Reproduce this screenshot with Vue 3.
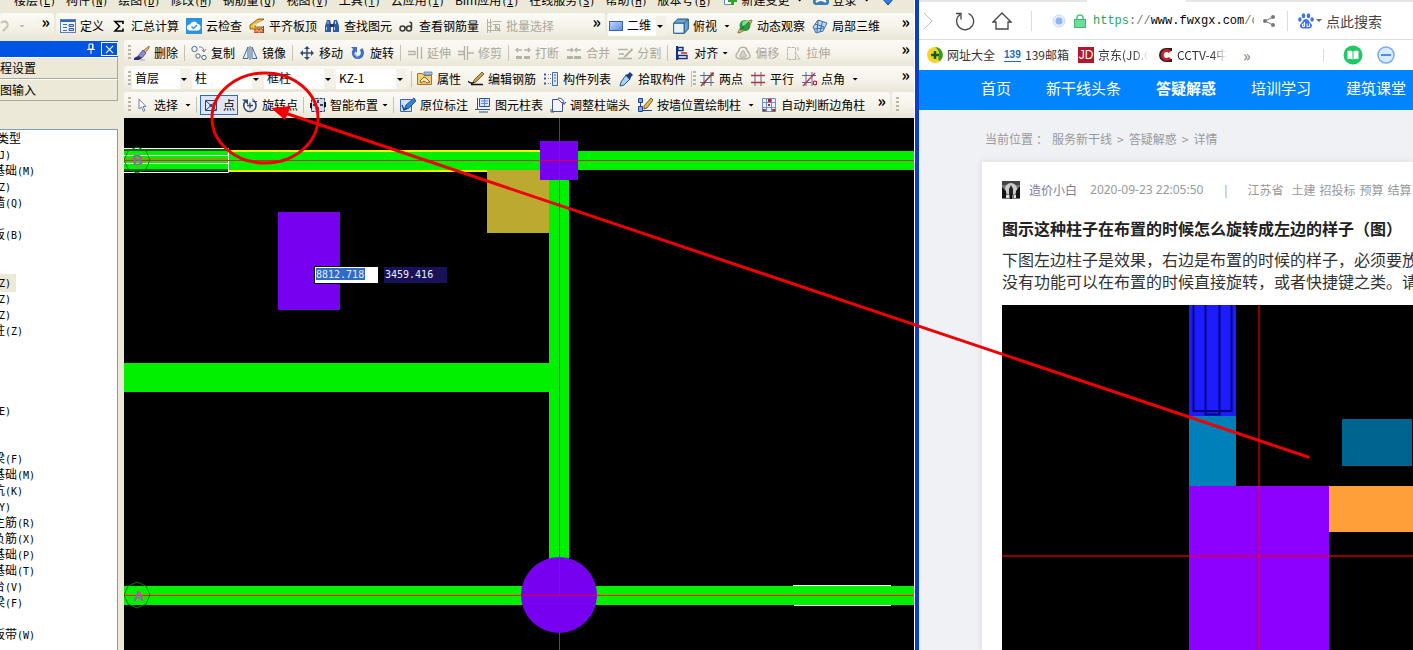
<script setup>
import { ref } from 'vue'

const icons = {
  undo: '<path d="M1 5c5-4 9 1 5 5l-3 3" fill="none" stroke="#c4c2b6" stroke-width="2"/>',
  define: '<rect x=".5" y="1.500" width="15" height="13" fill="#eef3fd" stroke="#5b7fc4"/><path d="M1 2h14v2H1z" fill="#3a62b4"/><path d="M3 6.500h4M3 9.500h4M3 12.500h4" stroke="#4a68a8"/><path d="M9 6.500h4.500v2H9zM9 10.500h4.500v2H9z" fill="#b9cdf5" stroke="#3a5fae"/>',
  sigma: '<path d="M12 6V3.500H4l4.500 4.700L4 13h8v-2.500" fill="none" stroke="#000" stroke-width="1.600"/>',
  cloud: '<rect width="16" height="16" fill="#2b94dc"/><path d="M4 12.500a3 3 0 0 1 0-6 4 4 0 0 1 7.500-.5 3.300 3.300 0 0 1 .5 6.500z" fill="#fff"/><path d="M5.500 8.500l2 2 3.500-3.500" fill="none" stroke="#2b94dc" stroke-width="1.500"/>',
  slab: '<path d="M1 7l8-6h6L6 7v2h8l-2 2H1z" fill="#f6b93a" stroke="#6b4a1a" stroke-width=".8"/><path d="M4 8l9-5" stroke="#fff3c4"/><path d="M5 11h9v4H5z" fill="#c9452b"/><path d="M5 13h9M8 11v2M12 11v2M10 13v2" stroke="#ffdf9a" stroke-width=".8"/><path d="M14.500 8v7" stroke="#555"/>',
  find: '<path d="M3 2h3l1 4v8H1V8zM10 2h3l2 6v6H9V6z" fill="#2f5c9e"/><path d="M6 6h4v3H6z" fill="#1d3a6a"/><path d="M2.500 9v3M10.500 9v3M4 3v3M11.500 3v3" stroke="#a9c9f2"/>',
  glasses: '<g fill="none" stroke="#3b3b3b" stroke-width="1.500"><circle cx="3.500" cy="10.500" r="2.500"/><circle cx="10" cy="10.500" r="2.500"/><path d="M6 10q1-1 1.500 0M12.500 10V5l-2-1"/></g>',
  batch: '<g fill="none" stroke="#b5b2a4"><path d="M1.500 1v14M4.500 1v14M1 4.500h5M1 8.500h5M1 12.500h14M6.500 3.500h9M6.500 6.500h7v6M9.500 6v6"/><path d="M9 8l5 5" stroke-width="2"/></g>',
  plane2d: '<defs><linearGradient id="p2d" x2="1" y2="1"><stop stop-color="#c5dcff"/><stop offset="1" stop-color="#5a8be0"/></linearGradient></defs><rect x="1.500" y="3.500" width="13" height="9" fill="url(#p2d)" stroke="#3a62b4"/>',
  cube: '<path d="M.7 5l4-4h10.600v10l-4 4.300H.7z" fill="#6aa6d6" stroke="#244f7c"/><path d="M1.200 5.500h9.500v9H1.200z" fill="#e6f4ff"/><path d="M1 5.200h10.200v10M11.200 5.200l4-4" fill="none" stroke="#244f7c"/>',
  orbit: '<path d="M1 15c0-4 9-13 14-13 0 4-9 13-14 13z" fill="#d7b38a" stroke="#a8682c"/><circle cx="8" cy="7.500" r="5.500" fill="#2c9a45"/><path d="M5 5c2-3 6-3 7-1-1 3-3 2-3 4-2 1-4 0-4-3z" fill="#7fdc84"/><path d="M3 12l9-8" stroke="#17662a"/>',
  local3d: '<path d="M1 9l5-7 9 3-4 8-7 2z" fill="#b9d8f4" stroke="#3a6ca4"/><path d="M3 6l9 3M6 2l-1 12M10.500 3.500L8 14M2 11l10-1" stroke="#3a6ca4" fill="none"/>',
  erase: '<path d="M15 1L9 6l2 2 4-5z" fill="#e4b67a" stroke="#7c4d20" stroke-width=".7"/><path d="M9 5L4 11l4 2 4-5z" fill="#8a8ed0" stroke="#333a80" stroke-width=".7"/><path d="M0 13l4-2 4 2-3 2H0z" fill="#29336e"/><path d="M6 15h5" stroke="#9aa"/>',
  copy: '<g fill="#f4f6fb" stroke="#556684"><circle cx="3.500" cy="4" r="2.700"/><circle cx="7" cy="11" r="2.200"/><circle cx="13" cy="12.500" r="2.200"/></g><path d="M8 2q4-1 5 4M11 5l2 2 2-3" fill="none" stroke="#6f83a6"/>',
  mirror: '<path d="M6 2v11.500H1zM10 2v11.500h5z" fill="#e4edf8" stroke="#456797"/><path d="M8 1v14" stroke="#456797"/>',
  move: '<path d="M8 2v12M2 8h12" stroke="#324e78" stroke-width="1.500"/><path d="M8 1l3 3H5zM8 15l3-3H5zM1 8l3-3v6zM15 8l-3-3v6z" fill="#324e78"/>',
  rotate: '<path d="M4.500 4.500C2 8 4 12.500 8 12.500S14 8 11 4" fill="none" stroke="#3f6fc2" stroke-width="3"/><path d="M1 2h6v6z" fill="#3f6fc2"/><path d="M4.500 8c0 2 2 4 4 4" fill="none" stroke="#a8c6f5"/>',
  extend: '<path d="M1 6.500h7v3H1M10.500 2v12M14.500 2v12" fill="none" stroke="#b5b2a4" stroke-width="1.300"/>',
  trim: '<path d="M0 6.500h6v3H0M6.500 1v14M9.500 1v14M10 8h6" fill="none" stroke="#b5b2a4" stroke-width="1.300"/>',
  brk: '<path d="M1 11h6v3H1zM9 11h6v3H9z" fill="#b5b2a4"/><path d="M1 5h6M15 5H9M3 3L1 5l2 2M13 3l2 2-2 2" fill="none" stroke="#b5b2a4" stroke-width="1.300"/>',
  merge: '<path d="M1 11h6v3H1zM8 11h7v3H8z" fill="#b5b2a4"/><path d="M1 5h6M15 5H9M5 3l2 2-2 2M11 3L9 5l2 2" fill="none" stroke="#b5b2a4" stroke-width="1.300"/>',
  split: '<path d="M1 4.500h10M1 13.500h14M2 9h5" stroke="#b5b2a4" stroke-width="1.500"/><path d="M15 3L8 10l-2 3 3-1 7-7z" fill="#b5b2a4"/>',
  align: '<path d="M3 1v14" stroke="#152f7a" stroke-width="2"/><path d="M4 2.500h5v3H4zM4 10.500h9v3H4z" fill="#fff" stroke="#152f7a" stroke-width="1.400"/><path d="M7 8h6" stroke="#c3262e" stroke-width="1.500"/>',
  offset: '<path d="M1 11c0-4 3-3 3-6s7-4 8 0c0 2 3 2 3 6s-14 4-14 0z" fill="none" stroke="#b5b2a4" stroke-width="1.500"/><path d="M4.500 11c0-2 2-2 2-4s3-2 3 0 2 2 2 4-7 1.500-7 0z" fill="#d2cfc3" stroke="#b5b2a4"/>',
  stretch: '<path d="M1.500 2.500h8v12h-8zM9 7l5 7H9" fill="none" stroke="#b5b2a4" stroke-dasharray="3 1"/><path d="M12 2v4" stroke="#b5b2a4"/>',
  props: '<path d="M.5 13.500v-11h5l1.500 2h7.500v9z" fill="#f8d36c" stroke="#a4742a"/><path d="M7 1h8v3H7z" fill="#9cc0ea" stroke="#4b6ea8" stroke-width=".7"/><path d="M3 10l4-4 2 1 4 4-3 1-3-2-3 2z" fill="#fbecc7" stroke="#5a3d1a" stroke-width=".8"/>',
  editbar: '<path d="M14 1L6 9l-1 3 3-1 8-8z" fill="#c7a24b" stroke="#4a3510" stroke-width=".7"/><path d="M0 10q2 3 6 1.500M3 13.500h12" fill="none" stroke="#111" stroke-width="1.300"/>',
  list: '<path d="M1 3.500h2M1 7.500h2M1 12.500h2" stroke="#2f59a8" stroke-width="2"/><path d="M5 3.500h3M5 7.500h3M5 12.500h3" stroke="#6b7ca4" stroke-dasharray="1 1"/><path d="M9.500 1.500h5v13h-5z" fill="#dce8fc" stroke="#4468a8"/><path d="M11 4h2M11 7h2M11 10h2" stroke="#4468a8"/>',
  picker: '<path d="M8 4l4 4-6 6-4 1 1-4z" fill="#a9d3fa" stroke="#27588f"/><path d="M7 4l3-1 2-2 3 3-2 2-1 3z" fill="#163e80"/>',
  twopt: '<path d="M5 1v14M12 1v14M1 4.500h14M1 11.500h14" stroke="#56669a"/><path d="M2 15L14 2" stroke="#7b4a25" stroke-width="1.500"/><path d="M13 1.500h2v2h-2zM4 11h2v2H4z" fill="#c3262e"/>',
  parallel: '<path d="M5 1v14M11 1v14" stroke="#56669a"/><path d="M1 4.500h14M1 11.500h14" stroke="#b8344a" stroke-width="1.500"/>',
  ptangle: '<path d="M5 1v14M11 1v14M1 4.500h14M1 11.500h9" stroke="#56669a"/><path d="M2 15L14 2" stroke="#b8344a" stroke-width="1.300"/><circle cx="14" cy="12" r="1.800" fill="#fff" stroke="#d21e2b" stroke-width="1.300"/>',
  cursor: '<path d="M5 2v10l2.500-2 2 4.500 1.500-1-2-4h3z" fill="#fff" stroke="#6e7fa8"/>',
  point: '<path d="M2.500 3.500h11v10h-11zM3 4l10 9M13 4L3 13" fill="none" stroke="#27417e"/><circle cx="8" cy="8.500" r="1.500" fill="#27417e"/>',
  rotpoint: '<path d="M4 3.500C-.5 8 2.500 14.500 8 14.500S16 8 12 3.500" fill="none" stroke="#2e4878" stroke-width="1.500"/><path d="M0 2.500h6v5z" fill="#2e4878"/><path d="M8 5.500v6M5 8.500h6" stroke="#2e4878" stroke-width="1.300"/><path d="M11 5V1.500M11 4.500h4" stroke="#2e4878"/>',
  smart: '<path d="M1.500 1.500h13v13h-13z" fill="#cfdbf2" stroke="#25375f" stroke-dasharray="3 1"/><path d="M8 3v3M8 10v3M3 8h3M10 8h3" stroke="#111" stroke-width="1.500"/><path d="M1 6v5M15 5v5" stroke="#111" stroke-width="2"/>',
  inplace: '<path d="M.5 2.500h11v12H.5z" fill="#cfe0fa" stroke="#3b66b0"/><path d="M14 1L6 8l-2 5 5-2 7-7z" fill="#3a82d8" stroke="#173f7e" stroke-width=".8"/><path d="M2 8l2 5 3-2" fill="none" stroke="#173f7e" stroke-width="1.300"/>',
  coltable: '<path d="M2.500 1v11.500H0" fill="none" stroke="#2f4f96"/><path d="M4.500 1.500h10v8h-10z" fill="#dce8fc" stroke="#2f4f96"/><path d="M6 4h7M6 6.500h7M9.500 2v7" stroke="#5f86cf"/><path d="M1 12.500h14M4 15h9" stroke="#2f4f96"/>',
  colend: '<path d="M2.500 2.500h6l4 4v8h-10z" fill="#f2f4fb" stroke="#3e5387"/><path d="M8 1q6 0 6 6M12 5l2 2.500L16 5" fill="none" stroke="#3e5387"/><path d="M1 12v3h3" fill="none" stroke="#3e5387"/>',
  bywall: '<path d="M1.500 1.500h4v4h-4zM1.500 9.500h4v5h-4z" fill="#7fa5e6" stroke="#24408a"/><path d="M3.500 5v5M6 13.500h9" stroke="#24408a"/><path d="M14 1L7 9v3l3-1 6-8z" fill="#e6b94c" stroke="#5a421a" stroke-width=".8"/>',
  autocorner: '<path d="M1.500 1.500h13v13h-13z" fill="#eef3fc" stroke="#6f8cc4"/><path d="M5.500 1v14M10.500 1v14M1 5.500h14M1 10.500h14" stroke="#6f8cc4"/><path d="M1.500 12h4v3h-4zM10.500 12h4v3h-4z" fill="#6b7480"/><path d="M7 2h3v3H7zM7 7h2v2H7zM2 12h2v2H2zM12 12h2v2h-2z" fill="#c4202c"/>',
  newdoc: '<path d="M2.500-4.500h9v17h-9z" fill="#fff" stroke="#6684b8"/><path d="M10.500 4v9M6 8.500h9" stroke="#2fa52f" stroke-width="3"/>',
  login: '<rect y="-3" width="16" height="16" rx="3" fill="#3a7fb4"/><circle cx="8" cy="4" r="3" fill="#fff"/><path d="M3 10q5-4 10 0" stroke="#fff" stroke-width="2" fill="none"/>',
  down: '<path d="M2 6h12l-6 7z" fill="#2f7fe0" stroke="#123f8c"/>'
}

const menus = [
  ['楼层', 'L'], ['构件', 'N'], ['绘图', 'D'], ['修改', 'M'], ['钢筋量', 'Q'], ['视图', 'V'], ['工具', 'T'],
  ['云应用', 'I'], ['Bim应用', 'I'], ['在线服务', 'S'], ['帮助', 'H'], ['版本号', 'B']
]

const b = (icon, label, extra = {}) => ({ icon, label, ...extra })
const off = { disabled: true }
const sep = { sep: true }
const grip = { grip: true }

const mainTools = [
  b('define', '定义'), b('sigma', '汇总计算'), b('cloud', '云检查'), b('slab', '平齐板顶'),
  b('find', '查找图元'), b('glasses', '查看钢筋量'), b('batch', '批量选择', off)
]
const viewTools = [b('cube', '俯视', { arrow: 'wide' }), b('orbit', '动态观察'), b('local3d', '局部三维')]

const editTools = [
  grip, b('erase', '删除'), sep, b('copy', '复制'), b('mirror', '镜像'), sep, b('move', '移动'), b('rotate', '旋转'), sep,
  b('extend', '延伸', off), b('trim', '修剪', off), sep, b('brk', '打断', off), b('merge', '合并', off), b('split', '分割', off), sep,
  b('align', '对齐', { arrow: 'near' }), b('offset', '偏移', off), b('stretch', '拉伸', off)
]
const memberTools = [
  sep, b('props', '属性'), b('editbar', '编辑钢筋'), b('list', '构件列表'), b('picker', '拾取构件'), sep, grip,
  b('twopt', '两点'), b('parallel', '平行'), b('ptangle', '点角', { arrow: 'wide' })
]
const drawTools = [
  grip, b('cursor', '选择', { arrow: 'wide' }), sep, b('point', '点', { pressed: true }), b('rotpoint', '旋转点'), sep,
  b('smart', '智能布置', { arrow: 'near' }), sep, b('inplace', '原位标注'), b('coltable', '图元柱表'), b('colend', '调整柱端头'),
  b('bywall', '按墙位置绘制柱', { arrow: 'wide' }), b('autocorner', '自动判断边角柱')
]
const combos = [
  { label: '楼层', value: '首层' }, { label: '构件类型', value: '柱' },
  { label: '构件类别', value: '框柱' }, { label: '构件名称', value: 'KZ-1' }
]

const tree = [
  ['', 'J'], ['基础', 'M'], ['', 'Z'], ['墙', 'Q'], null, ['板', 'B'], null, null, ['', 'Z', true], ['', 'Z'], ['', 'Z'],
  ['柱', 'Z'], null, null, null, null, ['', 'E'], null, null, ['梁', 'F'], ['基础', 'M'], ['坑', 'K'], ['', 'Y'],
  ['主筋', 'R'], ['负筋', 'X'], ['基础', 'P'], ['基础', 'T'], ['台', 'V'], ['梁', 'F'], null, ['板带', 'W']
]

const navs = ['首页', '新干线头条', '答疑解惑', '培训学习', '建筑课堂']
const coordX = ref('8812.718')
const coordY = ref('3459.416')
const rows = [
  { kind: 'edit', items: editTools },
  { kind: 'member', items: memberTools, combos: true },
  { kind: 'draw', items: drawTools, tail: true }
]
</script>

<template>
  <div class="desktop">
    <section class="cad">
      <nav class="menu">
        <button v-for="m in menus" :key="m[0]" class="menu-item">{{ m[0] }}<span class="code">(<u>{{ m[1] }}</u>)</span></button>
        <button class="tool"><svg class="ic" viewBox="0 0 16 16" v-html="icons.newdoc" />新建变更<i class="arr wide" /></button>
        <button class="tool"><svg class="ic" viewBox="0 0 16 16" v-html="icons.login" />登录<i class="arr wide" /></button>
        <button class="tool" aria-label="下载"><svg class="ic" viewBox="0 0 16 16" v-html="icons.down" /></button>
      </nav>

      <div class="toprow">
        <div class="band undo-band">
          <button class="tool" aria-label="撤销"><svg class="ic" viewBox="0 0 16 16" v-html="icons.undo" /><i class="arr pale" /></button>
          <button class="more">»</button>
        </div>
        <div class="band main-band">
          <button v-for="t in mainTools" :key="t.label" class="tool" :disabled="t.disabled">
            <svg class="ic" viewBox="0 0 16 16" v-html="icons[t.icon]" />{{ t.label }}
          </button>
          <button class="more">»</button>
        </div>
        <div class="band view-band">
          <label class="combo view-combo">
            <svg class="ic" viewBox="0 0 16 16" v-html="icons.plane2d" />
            <select aria-label="视图"><option>二维</option></select>
          </label>
          <button v-for="t in viewTools" :key="t.label" class="tool">
            <svg class="ic" viewBox="0 0 16 16" v-html="icons[t.icon]" />{{ t.label }}<i v-if="t.arrow" class="arr" :class="t.arrow" />
          </button>
          <button class="more">»</button>
        </div>
      </div>

      <div class="work">
        <aside class="side">
          <header class="side-head">
            <button class="pin" aria-label="固定">
              <svg viewBox="0 0 10 12"><path d="M3 1h4v5H3zM1 6.500h8M5 7v4M6.500 1v5" fill="none" stroke="#fff" /></svg>
            </button>
            <button class="close" aria-label="关闭">
              <svg viewBox="0 0 10 10"><path d="M1 1l8 8M9 1l-8 8" stroke="#fff" stroke-width="1.200" /></svg>
            </button>
          </header>
          <button class="side-btn">程设置</button>
          <button class="side-btn">图输入</button>
          <ul class="tree">
            <li class="tree-title">类型</li>
            <li v-for="(n, i) in tree" :key="i"><span v-if="n" :class="{ picked: n[2] }">{{ n[0] }}<span class="code">({{ n[1] }})</span></span></li>
          </ul>
        </aside>

        <div class="main">
          <div v-for="row in rows" :key="row.kind" class="toolrow" :class="row.kind">
            <div class="band">
              <template v-if="row.combos">
                <i class="grip" />
                <div class="combos">
                  <label v-for="c in combos" :key="c.label" class="combo">
                    <select :aria-label="c.label"><option>{{ c.value }}</option></select>
                  </label>
                </div>
              </template>
              <template v-for="(t, i) in row.items" :key="i">
                <i v-if="t.sep" class="sep" />
                <i v-else-if="t.grip" class="grip" />
                <button v-else class="tool" :class="{ pressed: t.pressed }" :disabled="t.disabled">
                  <svg class="ic" viewBox="0 0 16 16" v-html="icons[t.icon]" />{{ t.label }}<i v-if="t.arrow" class="arr" :class="t.arrow" />
                </button>
              </template>
              <button class="more">»</button>
            </div>
            <div v-if="row.tail" class="band tail"><i class="grip" /></div>
          </div>

          <div class="canvas">
            <svg class="drawing" viewBox="0 0 790 532" preserveAspectRatio="xMinYMin slice">
              <path d="M0 33h790v19H0zM0 245h425v29H0zM425 52h20v400h-20zM0 468h790v19H0z" fill="#00f000" />
              <path d="M104 32h312v2H104zM104 52h312v2H104z" fill="#f4f400" />
              <path d="M0 31h104v2H0zM0 51h104v2H0z" fill="#006c00" />
              <path d="M0 30.500h104.500v24H0M0 37.500h104M0 45.500h104" fill="none" stroke="#fff" />
              <path d="M0 40h104v2H0zM0 476h790v1H0z" fill="#80a800" />
              <path d="M363 52h62v63h-62z" fill="#bba930" />
              <path d="M669 467.500h98M670 487.500h97" stroke="#fff" />
              <path d="M154 94h62v98h-62zM416 23h38v39h-38z" fill="#7800f0" />
              <circle cx="435" cy="477" r="38" fill="#7800f0" />
              <path d="M0 42h790v1H0zM0 477h790v1H0z" fill="#b43c10" />
              <path d="M435 515h1v17h-1z" fill="#0b7a20" />
              <path d="M435 0h1v477h-1zM397 477h76v1h-76zM416 42h38v1h-38z" fill="#e40028" />
              <path d="M435 478h1v37h-1z" fill="#3d3378" />
              <path d="M13 29l9 4 4 9-4 9-9 4-9-4-4-9 4-9zM13 464l9 4 4 9-4 9-9 4-9-4-4-9 4-9z" fill="none" stroke="#007a00" />
              <g class="axis" text-anchor="middle"><text x="14" y="47">B</text><text x="15" y="483">A</text></g>
            </svg>
            <input v-model="coordX" class="coord active" aria-label="X 坐标">
            <input v-model="coordY" class="coord idle" aria-label="Y 坐标">
          </div>
        </div>
      </div>
    </section>

    <section class="browser">
      <div class="tabs"><i class="tab" /></div>
      <div class="address">
        <button class="nav-fwd" aria-label="前进"><svg viewBox="0 0 10 18"><path d="M1 1l8 8-8 8" fill="none" stroke="#c0c0c0" /></svg></button>
        <button class="nav-reload" aria-label="刷新"><svg viewBox="0 0 20 20"><path d="M13.500 2.500A8.500 8.500 0 1 1 5 3.500M1 2.500h5v6" fill="none" stroke="#444" stroke-width="1.300" /></svg></button>
        <button class="nav-home" aria-label="主页"><svg viewBox="0 0 20 20"><path d="M1 11l9-9 9 9h-3v7H4v-7z" fill="none" stroke="#444" stroke-width="1.300" /></svg></button>
        <i class="vline" />
        <svg class="dot" viewBox="0 0 14 14"><circle cx="7" cy="7" r="6" fill="#e4eeff" stroke="#c6dafd" /><circle cx="7" cy="7" r="3.500" fill="#8fb4f6" /></svg>
        <svg class="lock" viewBox="0 0 12 14"><path d="M3 6V4a3 3 0 0 1 6 0v2" fill="none" stroke="#52c582" stroke-width="1.500" /><rect x=".5" y="5.500" width="11" height="8" fill="#6cdc98" stroke="#3fb871" /></svg>
        <a class="url" href="#"><b class="scheme">https</b><span class="dim">://</span>www.fwxgx.com<span class="dim">/c</span></a>
        <button class="share" aria-label="分享"><svg viewBox="0 0 12 14"><path d="M10 3L2 7l8 4" fill="none" stroke="#777" /><g fill="#777"><circle cx="10" cy="3" r="2" /><circle cx="2" cy="7" r="2" /><circle cx="10" cy="11" r="2" /></g></svg></button>
        <i class="vline" />
        <button class="engine" aria-label="搜索引擎">
          <svg viewBox="0 0 16 16"><g fill="#3f72e8"><ellipse cx="5.500" cy="2.800" rx="1.800" ry="2.500" /><ellipse cx="10.500" cy="2.800" rx="1.800" ry="2.500" /><ellipse cx="1.900" cy="6.500" rx="1.700" ry="2.200" /><ellipse cx="14.100" cy="6.500" rx="1.700" ry="2.200" /><path d="M8 6c3 0 3 3 5 4.500 2 2 .5 5-2 5H5c-3 0-4-3-2-5C5 9 5 6 8 6z" /></g><path d="M6.500 9v4.500h-2v-2.500h2M9 10.500v3h2.500v-3" fill="none" stroke="#fff" /></svg>
          <i class="arr grey" />
        </button>
        <input class="search" placeholder="点此搜索" aria-label="点此搜索">
      </div>

      <div class="bookmarks">
        <a href="#" class="bm"><svg viewBox="0 0 16 16"><circle cx="8" cy="8" r="8" fill="#f4d622" /><path d="M8 0a8 8 0 0 1 5 14q-3-1-1-5 1-5-4-9z" fill="#2a9a3a" /><path d="M8 4v8M4 8h8" stroke="#145a20" stroke-width="2.500" /></svg>网址大全</a>
        <a href="#" class="bm"><span class="b139">139</span>139邮箱</a>
        <a href="#" class="bm"><span class="bjd">JD</span><span class="fade">京东(JD.C</span></a>
        <a href="#" class="bm"><svg viewBox="0 0 16 16"><path d="M15 2.500H9a5.500 5.500 0 0 0 0 11h6" fill="none" stroke="#222" stroke-width="3" /><path d="M13 5a4.500 4.500 0 1 0 0 6" fill="none" stroke="#d01a24" stroke-width="3" /></svg><span class="fade">CCTV-4中文</span></a>
        <button class="bm-more">»</button>
        <span class="bm-tools">
          <i class="vline short" />
          <button aria-label="阅读"><svg viewBox="0 0 20 20"><circle cx="10" cy="10" r="9.500" fill="#1fc866" /><path d="M4.500 6q3-1 5 .5v8q-2-1-5-.5zM15.500 6q-3-1-5 .5v8q2-1 5-.5z" fill="#fff" /></svg></button>
          <button aria-label="缩小"><svg viewBox="0 0 20 20"><circle cx="10" cy="10" r="8" fill="#dbeaff" stroke="#73a8f2" stroke-width="1.500" /><path d="M5 10h10" stroke="#4e8dea" stroke-width="2" /></svg></button>
        </span>
      </div>

      <nav class="site-nav">
        <a v-for="(n, i) in navs" :key="n" href="#" :class="{ on: i === 2 }">{{ n }}</a>
      </nav>

      <div class="page">
        <p class="crumbs"><span>当前位置</span><span>：</span><a href="#">服务新干线</a><span>&gt;</span><a href="#">答疑解惑</a><span>&gt;</span><span>详情</span></p>
        <article class="card">
          <div class="meta">
            <svg class="avatar" viewBox="0 0 18 18"><rect width="18" height="18" fill="#777" /><path d="M0 0h18v4H0z" fill="#444" /><circle cx="9" cy="8" r="6" fill="#ccc" /><path d="M9 4l2 4v6H7V8z" fill="#222" /><path d="M0 6l4 4v7H0zM18 5l-4 5v7h4z" fill="#151515" /><path d="M4 14h3v3H4zM12 14h2v3h-2z" fill="#ddd" /><path d="M8 13h2v5H8z" fill="#111" /></svg>
            <a href="#" class="author">造价小白</a><time>2020-09-23 22:05:50</time><span class="bar">|</span><span>江苏省</span><span class="tags"><span>土建</span><span>招投标</span><span>预算</span><span>结算</span></span>
          </div>
          <h1>图示这种柱子在布置的时候怎么旋转成左边的样子（图）</h1>
          <p class="body">下图左边柱子是效果，右边是布置的时候的样子，必须要放<br>没有功能可以在布置的时候直接旋转，或者快捷键之类。请</p>
          <svg class="photo" viewBox="0 0 411 345" preserveAspectRatio="xMinYMin slice">
            <rect width="411" height="345" fill="#000" />
            <path d="M187 0h47v111h-47z" fill="#1c1cff" />
            <path d="M191.500 0v106h38V0M203.500 0v109.500h14V0" fill="none" stroke="#00007c" stroke-width="2" />
            <path d="M187 111h47v71h-47z" fill="#0080b8" />
            <path d="M340 114h70v47h-70z" fill="#006490" />
            <path d="M187 181h140v164H187z" fill="#8c00ff" />
            <path d="M327 181h84v46h-84z" fill="#ff9f3a" />
            <path d="M257 0v181M0 251h187M327 251h84" stroke="#8c0000" stroke-width="2" />
            <path d="M257 181v164M187 251h140" stroke="#c00080" stroke-width="2" />
          </svg>
        </article>
      </div>
    </section>

    <svg class="markup" viewBox="0 0 1413 650" preserveAspectRatio="xMinYMin meet">
      <ellipse cx="265" cy="118" rx="53" ry="45" fill="none" stroke="#f00000" stroke-width="3" />
      <path d="M1308 457L282 112" stroke="#f00000" stroke-width="3" stroke-linecap="round" />
      <path d="M271 108l20-2-6 14z" fill="#f00000" />
    </svg>
  </div>
</template>

<style>
body { margin: 0; }
</style>

<style scoped>
.desktop {
  position: relative;
  display: grid;
  grid-template-columns: 919fr 494fr;
  height: 100vh;
  overflow: hidden;
  font: 12px/16px "Noto Sans CJK SC", sans-serif;
  color: #000;
}
button, select, input { font: inherit; color: inherit; border: 0; padding: 0; margin: 0; background: none; border-radius: 0; }
button { flex: none; white-space: nowrap; }
a { color: inherit; text-decoration: none; }
svg { display: block; flex: none; overflow: hidden; }
.code { font: 10px/16px "DejaVu Sans Mono", monospace; }

.cad {
  display: flex;
  flex-direction: column;
  min-width: 0;
  overflow: hidden;
  background: #ece9d8;
  border-right: 4px solid #0a3fc4;
  box-shadow: inset -1px 0 #fff;
  padding-right: 1px;
}
.menu { display: flex; align-items: flex-end; gap: 10px; height: 8px; padding: 0 0 5px 14px; overflow: hidden; }
.menu-item, .menu .tool { height: 16px; line-height: 16px; }

.toprow { display: flex; gap: 2px; height: 26px; }
.band {
  display: flex;
  align-items: center;
  gap: 7px;
  min-width: 0;
  overflow: hidden;
  background: linear-gradient(#fbfaf6, #f4f2e8 60%, #e9e6d6);
  border-radius: 3px;
}
.undo-band { width: 54px; gap: 0; }
.undo-band .tool { gap: 3px; }
.main-band { flex: 1; padding-left: 4px; }
.view-band { width: 306px; padding-left: 1px; }
.tool { display: flex; align-items: center; gap: 4px; height: 20px; }
.tool:disabled { color: #aca899; }
.ic { width: 16px; height: 16px; }
.tool.pressed { margin: 0 -3px; padding: 0 2px; border: 1px solid #316ac5; background: #dfe5f2; }
.more { align-self: flex-start; margin: 0 4px 0 auto; font-size: 16px; line-height: 16px; font-weight: bold; }
.arr { width: 6px; height: 3px; background: #000; clip-path: polygon(0 0, 100% 0, 50% 100%); }
.arr.wide { margin-left: 3px; }
.arr.pale { background: #b8b5a8; }
.arr.grey { background: #666; }
.sep { width: 1px; height: 16px; margin: 0 -1px; background: #c5c2b2; }
.draw .sep { margin: 0 -1px 0 -2px; }
.member .sep { margin: 0 -2px; }
.member .sep + .grip { margin-left: -4px; }
.grip { flex: none; width: 3px; height: 16px; margin-right: -4px; background: repeating-linear-gradient(#b9b6a6 0 2px, transparent 2px 4px); }

.combos { display: flex; gap: 2px; margin-left: -2px; }
.combo { position: relative; display: flex; align-items: center; width: 70px; height: 20px; background: #fff; }
.combo:first-child { width: 58px; }
.combo select { flex: 1; min-width: 0; height: 20px; padding: 0 0 2px 3px; appearance: none; outline: 0; background: linear-gradient(#f3f1e7, #f3f1e7) right / 10px 100% no-repeat; }
.combo::after {
  content: "";
  position: absolute;
  right: 3px;
  top: 9px;
  width: 6px;
  height: 3px;
  background: #000;
  clip-path: polygon(0 0, 100% 0, 50% 100%);
  pointer-events: none;
}
.view-band .combo { width: 58px; }

.work { flex: 1; display: flex; gap: 6px; min-height: 0; }
.side { display: flex; flex-direction: column; width: 118px; padding-top: 2px; overflow: hidden; }
.side-head { display: flex; align-items: center; justify-content: flex-end; gap: 5px; height: 16px; background: #0054e3; }
.pin svg { width: 10px; height: 12px; }
.close { display: grid; place-items: center; width: 17px; height: 14px; border: 1px solid #fff; }
.close svg { width: 9px; height: 9px; }
.side-btn { height: 22px; text-align: left; border: 1px solid #fff; border-width: 1px 1px 1px 0; border-right-color: #aca899; border-bottom-color: #aca899; background: #ece9d8; }
.tree { flex: 1; margin: 28px 0 0; padding: 0; list-style: none; background: #fff; border: 1px solid #7f9db9; border-left: 0; border-bottom: 0; overflow: hidden; }
.tree li { height: 16px; margin-left: -7px; white-space: nowrap; }
.tree .tree-title { margin-left: -3px; }
.picked { display: inline-block; padding-right: 5px; background: #ece9d8; }

.main { flex: 1; display: flex; flex-direction: column; min-width: 0; padding-top: 1px; }
.toolrow { display: flex; height: 26px; gap: 2px; }
.toolrow .band { flex: 1; padding-left: 4px; }
.toolrow .tail { flex: 0 0 18px; }
.canvas { position: relative; flex: 1; min-height: 0; background: #000; overflow: hidden; }
.drawing { width: 100%; height: 100%; }
.axis { font: bold 15px "Liberation Sans", sans-serif; fill: #a060a8; }
.coord { position: absolute; top: 149px; box-sizing: border-box; width: 63px; height: 16px; padding: 0 0 2px 1px; font: 10px/14px "DejaVu Sans Mono", monospace; color: #e8eeff; outline: 0; }
.coord.active { left: 191px; background: linear-gradient(#316ac5, #316ac5) 1px 1px / 49px 12px no-repeat #fff; outline: 1px solid #000; }
.coord.idle { left: 260px; background: #1a1258; }

.browser { display: flex; flex-direction: column; min-width: 0; overflow: hidden; background: #fff; }
.tabs { height: 2px; background: #e6e6e6; }
.tab { display: block; width: 20%; height: 2px; margin-left: 34%; background: #fff; }
.address { display: flex; align-items: center; height: 37px; padding-left: 4px; border-bottom: 1px solid #dcdcdc; }
.nav-fwd svg { width: 10px; height: 18px; }
.nav-reload svg, .nav-home svg { width: 20px; height: 20px; }
.nav-reload { margin-left: 22px; }
.nav-home { margin-left: 17px; }
.vline { flex: none; width: 1px; height: 20px; background: #dcdcdc; }
.nav-home + .vline { margin-left: 19px; }
.dot { width: 14px; height: 14px; margin-left: 20px; }
.lock { width: 12px; height: 14px; margin-left: 8px; }
.url { width: 161px; margin-left: 7px; overflow: hidden; white-space: nowrap; font: 12px/18px "Liberation Mono", monospace; }
.scheme { font-weight: normal; color: #27a55b; }
.dim { color: #777; }
.share { margin-left: 9px; }
.share svg { width: 12px; height: 14px; }
.share + .vline { margin-left: 12px; }
.engine { display: flex; align-items: center; gap: 2px; margin-left: 10px; }
.engine svg { width: 16px; height: 16px; }
.search { flex: 1; min-width: 0; margin-left: 4px; font-size: 14px; outline: 0; }
.search::placeholder { color: #444; opacity: 1; }

.bookmarks { display: flex; align-items: center; height: 30px; padding-left: 8px; color: #333; }
.bm { display: flex; align-items: center; gap: 4px; margin-right: 9px; white-space: nowrap; }
.bm svg { width: 16px; height: 16px; }
.b139 { width: 17px; font: bold 10px/12px "Liberation Sans", sans-serif; color: #1c6cb0; border-bottom: 1px solid #1c6cb0; }
.bjd { width: 16px; height: 16px; background: #b5162b; color: #fff; text-align: center; font: 12px/16px "Liberation Sans", sans-serif; }
.fade { width: 50px; overflow: hidden; mask-image: linear-gradient(90deg, #000 70%, transparent); }
.bm-more { margin-left: 7px; font-size: 16px; color: #777; }
.bm-tools { display: flex; align-items: center; gap: 13px; margin: 0 17px 0 auto; }
.bm-tools svg { width: 20px; height: 20px; }
.bm-tools .vline { height: 13px; margin-right: 6px; }

.site-nav { display: flex; align-items: center; gap: 35px; height: 40px; padding: 0 0 4px 62px; box-sizing: border-box; background: #0084ff; color: #fff; font-size: 15px; white-space: nowrap; }
.site-nav .on { font-weight: bold; }
.page { flex: 1; min-height: 0; padding-left: 63px; background: #f0f1f4; overflow: hidden; }
.crumbs { display: flex; gap: 5px; margin: 21px 0 15px 3px; color: #999; white-space: nowrap; }
.crumbs span:nth-child(2) { margin: 0 -1px 0 -2px; }
.card { padding: 18px 0 0 20px; background: #fff; box-shadow: 0 0 6px #d4d6da; }
.meta { display: flex; align-items: center; height: 20px; color: #999; white-space: nowrap; }
.avatar { width: 18px; height: 18px; margin-right: 9px; }
.author { color: #7a7a9e; }
.meta time { margin-left: 13px; font-family: "Noto Sans", sans-serif; }
.bar { width: 43px; padding-left: 1px; text-align: center; }
.tags { display: flex; gap: 4px; margin-left: 8px; }
h1 { margin: 17px 0 9px; font-size: 16px; line-height: 22px; color: #222; white-space: nowrap; }
.body { margin: 0; font-size: 16px; line-height: 22px; color: #333; white-space: nowrap; }
.photo { width: 100%; height: 345px; margin-top: 13px; }

.markup { position: absolute; inset: 0; width: 100%; height: 100%; pointer-events: none; }
</style>
